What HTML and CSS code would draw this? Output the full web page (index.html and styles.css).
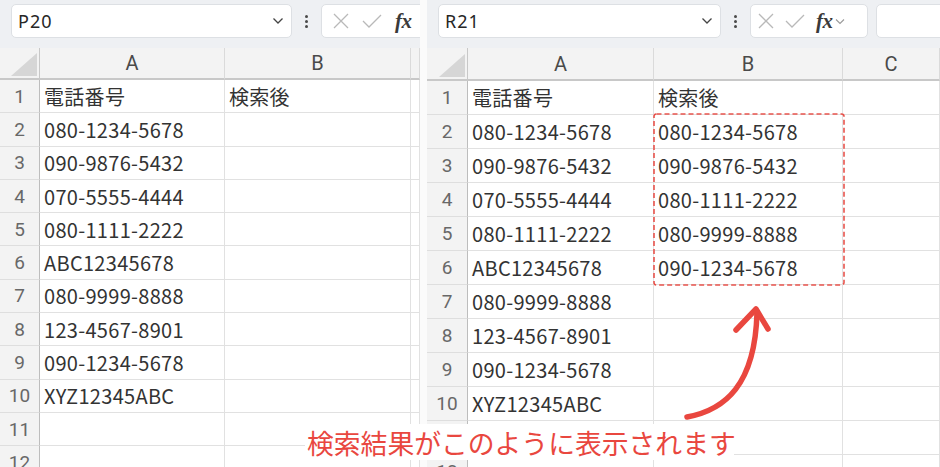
FILE: index.html
```html
<!DOCTYPE html>
<html lang="ja">
<head>
<meta charset="utf-8">
<title>検索結果</title>
<link rel="stylesheet" href="styles.css">
</head>
<body>
<div class="stage">
  <section class="pane pane-left">
    <div class="toolbar">
      <div class="namebox">
        <span class="ref">P20</span>
        <svg class="chev" width="12" height="8" viewBox="0 0 12 8"><path d="M1.5 1.5 L6 6 L10.5 1.5" fill="none" stroke="#444" stroke-width="1.3"/></svg>
      </div>
      <div class="dots"><i></i><i></i><i></i></div>
      <div class="fbox">
        <svg class="ico" width="16" height="16" viewBox="0 0 16 16"><path d="M1 1 L15 15 M15 1 L1 15" stroke="#b9b9b9" stroke-width="1.3"/></svg>
        <svg class="ico" width="20" height="16" viewBox="0 0 20 16"><path d="M1 8 L7 14 L19 2" fill="none" stroke="#b9b9b9" stroke-width="1.3"/></svg>
        <span class="fx">fx</span>
      </div>
    </div>
    <div class="grid">
      <div class="corner"><svg width="26" height="23" viewBox="0 0 26 23"><polygon points="26,0 26,23 0,23" fill="#d6d6d6"/></svg></div>
      <div class="ch">A</div><div class="ch">B</div><div class="ch"></div>

      <div class="rh">1</div><div class="c">電話番号</div><div class="c">検索後</div><div class="c"></div>
      <div class="rh">2</div><div class="c">080-1234-5678</div><div class="c"></div><div class="c"></div>
      <div class="rh">3</div><div class="c">090-9876-5432</div><div class="c"></div><div class="c"></div>
      <div class="rh">4</div><div class="c">070-5555-4444</div><div class="c"></div><div class="c"></div>
      <div class="rh">5</div><div class="c">080-1111-2222</div><div class="c"></div><div class="c"></div>
      <div class="rh">6</div><div class="c">ABC12345678</div><div class="c"></div><div class="c"></div>
      <div class="rh">7</div><div class="c">080-9999-8888</div><div class="c"></div><div class="c"></div>
      <div class="rh">8</div><div class="c">123-4567-8901</div><div class="c"></div><div class="c"></div>
      <div class="rh">9</div><div class="c">090-1234-5678</div><div class="c"></div><div class="c"></div>
      <div class="rh">10</div><div class="c">XYZ12345ABC</div><div class="c"></div><div class="c"></div>
      <div class="rh">11</div><div class="c"></div><div class="c"></div><div class="c"></div>
      <div class="rh">12</div><div class="c"></div><div class="c"></div><div class="c"></div>
    </div>
  </section>

  <div class="divider"></div>

  <section class="pane pane-right">
    <div class="toolbar">
      <div class="namebox">
        <span class="ref">R21</span>
        <svg class="chev" width="12" height="8" viewBox="0 0 12 8"><path d="M1.5 1.5 L6 6 L10.5 1.5" fill="none" stroke="#444" stroke-width="1.3"/></svg>
      </div>
      <div class="dots"><i></i><i></i><i></i></div>
      <div class="fbox">
        <svg class="ico" width="16" height="16" viewBox="0 0 16 16"><path d="M1 1 L15 15 M15 1 L1 15" stroke="#b9b9b9" stroke-width="1.3"/></svg>
        <svg class="ico" width="20" height="16" viewBox="0 0 20 16"><path d="M1 8 L7 14 L19 2" fill="none" stroke="#b9b9b9" stroke-width="1.3"/></svg>
        <span class="fx">fx</span>
        <svg class="chev-sm" width="10" height="7" viewBox="0 0 10 7"><path d="M1 1.5 L5 5.5 L9 1.5" fill="none" stroke="#9a9a9a" stroke-width="1.1"/></svg>
      </div>
      <div class="finput"></div>
    </div>
    <div class="grid">
      <div class="corner"><svg width="26" height="23" viewBox="0 0 26 23"><polygon points="26,0 26,23 0,23" fill="#d6d6d6"/></svg></div>
      <div class="ch">A</div><div class="ch">B</div><div class="ch">C</div>

      <div class="rh">1</div><div class="c">電話番号</div><div class="c">検索後</div><div class="c"></div>
      <div class="rh">2</div><div class="c">080-1234-5678</div><div class="c">080-1234-5678</div><div class="c"></div>
      <div class="rh">3</div><div class="c">090-9876-5432</div><div class="c">090-9876-5432</div><div class="c"></div>
      <div class="rh">4</div><div class="c">070-5555-4444</div><div class="c">080-1111-2222</div><div class="c"></div>
      <div class="rh">5</div><div class="c">080-1111-2222</div><div class="c">080-9999-8888</div><div class="c"></div>
      <div class="rh">6</div><div class="c">ABC12345678</div><div class="c">090-1234-5678</div><div class="c"></div>
      <div class="rh">7</div><div class="c">080-9999-8888</div><div class="c"></div><div class="c"></div>
      <div class="rh">8</div><div class="c">123-4567-8901</div><div class="c"></div><div class="c"></div>
      <div class="rh">9</div><div class="c">090-1234-5678</div><div class="c"></div><div class="c"></div>
      <div class="rh">10</div><div class="c">XYZ12345ABC</div><div class="c"></div><div class="c"></div>
      <div class="rh">11</div><div class="c"></div><div class="c"></div><div class="c"></div>
      <div class="rh">12</div><div class="c"></div><div class="c"></div><div class="c"></div>
    </div>
  </section>

  <svg class="marquee" width="193" height="174" viewBox="0 0 193 174">
    <rect x="1" y="1" width="190" height="171" rx="2.5" fill="none" stroke="#e8534c" stroke-width="1.6" stroke-dasharray="5 3"/>
  </svg>

  <svg class="arrow" width="110" height="130" viewBox="670 300 110 130">
    <path d="M687 417 C 725 410, 755 385, 757 313" fill="none" stroke="#e9473f" stroke-width="5.5" stroke-linecap="round"/>
    <path d="M736 330 L756 309 L768 329" fill="none" stroke="#e9473f" stroke-width="5.5" stroke-linecap="round" stroke-linejoin="round"/>
  </svg>

  <div class="note">検索結果がこのように表示されます</div>
</div>
</body>
</html>
```

FILE: styles.css
```css
html, body {
  margin: 0;
  padding: 0;
  background: #ffffff;
}

.stage {
  position: relative;
  width: 940px;
  height: 467px;
  overflow: hidden;
  display: flex;
  background: #ffffff;
}

.pane {
  display: flex;
  flex-direction: column;
  overflow: hidden;
  height: 467px;
}

.pane-left { width: 420px; }
.divider { width: 7px; background: #fbfbfb; }
.pane-right { width: 513px; }

/* toolbar */
.toolbar {
  height: 48px;
  flex: none;
  display: flex;
  align-items: flex-start;
  padding-top: 4px;
  box-sizing: border-box;
  background: #eef0f3;
}

.pane-left .toolbar { padding-left: 11px; }
.pane-right .toolbar { padding-left: 11px; }

.namebox {
  height: 34px;
  box-sizing: border-box;
  background: #ffffff;
  border: 1px solid #dde0e4;
  border-radius: 5px;
  display: flex;
  align-items: center;
  justify-content: space-between;
  padding: 0 7px 0 6px;
  flex: none;
}

.pane-left .namebox { width: 281px; }
.pane-right .namebox { width: 283px; }

.ref {
  font-family: "Noto Sans", "Open Sans", sans-serif;
  font-size: 18px;
  letter-spacing: 1px;
  color: #262626;
}

.chev { display: block; }

.dots {
  width: 5px;
  height: 34px;
  margin: 0 12px 0 12px;
  display: flex;
  flex-direction: column;
  justify-content: center;
  align-items: center;
  gap: 2px;
  flex: none;
}

.dots i {
  display: block;
  width: 3px;
  height: 3px;
  border-radius: 50%;
  background: #4a4a4a;
}

.fbox {
  height: 34px;
  box-sizing: border-box;
  background: #ffffff;
  border: 1px solid #dde0e4;
  border-radius: 5px;
  display: flex;
  align-items: center;
  gap: 12px;
  padding: 0 6px 0 11px;
  flex: none;
}

.pane-left .fbox { width: 130px; gap: 13px; }
.pane-right .fbox { width: 118px; gap: 11px; padding-left: 7px; }

.ico { display: block; }

.fx {
  font-family: "Liberation Serif", "DejaVu Serif", serif;
  font-style: italic;
  font-weight: bold;
  font-size: 21px;
  color: #3a3a3a;
  letter-spacing: -0.5px;
}

.chev-sm { display: block; margin-left: -9px; }

.finput {
  margin-left: 8px;
  width: 80px;
  height: 34px;
  box-sizing: border-box;
  background: #ffffff;
  border: 1px solid #dde0e4;
  border-radius: 5px;
  flex: none;
}

/* grid */
.grid {
  display: grid;
  flex: none;
}

.pane-left .grid {
  grid-template-columns: 40px 185px 186px 9px;
  grid-template-rows: 32px repeat(12, 33.3px);
}

.pane-right .grid {
  grid-template-columns: 41px 186px 189px 97px;
  grid-template-rows: 33px repeat(12, 34px);
}

.corner {
  background: #f3f3f3;
  border-bottom: 2px solid #c8c8c8;
  border-right: 1px solid #c8c8c8;
  display: flex;
  align-items: flex-end;
  justify-content: flex-end;
  padding: 0 2px 2px 0;
  box-sizing: border-box;
}

.ch {
  background: #f3f3f3;
  border-bottom: 2px solid #c8c8c8;
  border-right: 1px solid #dadada;
  box-sizing: border-box;
  display: flex;
  align-items: center;
  justify-content: center;
  font-family: "Liberation Sans Narrow", "Roboto", sans-serif;
  font-size: 20px;
  color: #4a4a4a;
}

.rh {
  background: #f3f3f3;
  border-bottom: 1px solid #dedede;
  border-right: 1px solid #bdbdbd;
  box-sizing: border-box;
  display: flex;
  align-items: center;
  justify-content: center;
  font-family: "Liberation Sans Narrow", "Roboto", sans-serif;
  font-size: 19px;
  color: #686868;
}

.c {
  background: #ffffff;
  border-bottom: 1px solid #e1e1e1;
  border-right: 1px solid #e1e1e1;
  box-sizing: border-box;
  display: flex;
  align-items: center;
  padding-left: 4px;
  white-space: nowrap;
  overflow: hidden;
  font-family: "Noto Sans CJK JP", sans-serif;
  font-size: 20px;
  letter-spacing: 0.3px;
  color: #333333;
}

/* annotations */
.marquee {
  position: absolute;
  left: 653px;
  top: 113px;
}

.arrow {
  position: absolute;
  left: 670px;
  top: 300px;
}

.note {
  position: absolute;
  left: 305px;
  top: 424px;
  width: 429px;
  height: 36px;
  background: #ffffff;
  box-sizing: border-box;
  padding-left: 2px;
  display: flex;
  align-items: center;
  font-family: "Noto Sans CJK JP", sans-serif;
  font-size: 26.8px;
  color: #e9473f;
  white-space: nowrap;
}
```
